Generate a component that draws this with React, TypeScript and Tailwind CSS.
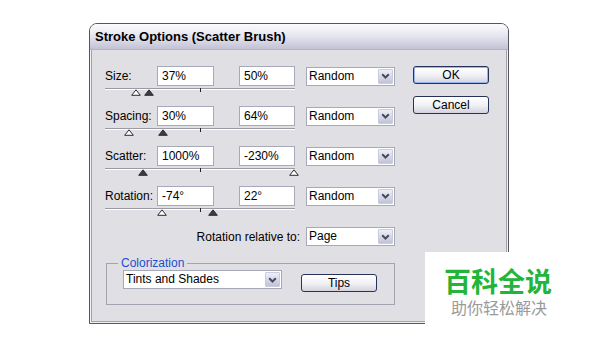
import React from "react";

type Thumb = { left: number; filled: boolean };

function Chevron() {
  return (
    <svg width="9" height="6" viewBox="0 0 9 6" fill="none">
      <path d="M1.2 1.2 L4.5 4.5 L7.8 1.2" stroke="#4a4a5e" strokeWidth="2" />
    </svg>
  );
}

function Select({ value, width }: { value: string; width: string }) {
  return (
    <div className={`${width} h-[19px] flex items-stretch bg-white border border-[#a5a9b8]`}>
      <span className="flex-1 pl-[2px] leading-[17px] text-black">{value}</span>
      <div className="w-[15px] m-px flex items-center justify-center rounded-[1px] border border-[#c9cbe0] bg-gradient-to-b from-[#eef0f8] to-[#bfc3d6]">
        <Chevron />
      </div>
    </div>
  );
}

function Triangle({ left, filled }: Thumb) {
  return (
    <svg
      className="absolute top-[3px]"
      style={{ left }}
      width="10"
      height="7"
      viewBox="0 0 10 7"
    >
      <polygon
        points="5,0.8 9.3,6.3 0.7,6.3"
        fill={filled ? "#3c3c44" : "#ffffff"}
        stroke="#2b2b30"
        strokeWidth="1"
      />
    </svg>
  );
}

function Row({ label, a, b, thumbs }: { label: string; a: string; b: string; thumbs: Thumb[] }) {
  return (
    <div className="h-[40px] flex flex-col">
      <div className="h-[20px] flex items-center">
        <span className="w-[52px]">{label}</span>
        <div className="w-[57px] h-[20px] bg-white border border-[#a5a9b8] pl-[4px] leading-[18px]">{a}</div>
        <div className="ml-[25px] w-[56px] h-[20px] bg-white border border-[#a5a9b8] pl-[4px] leading-[18px]">{b}</div>
        <div className="ml-[11px]">
          <Select value="Random" width="w-[89px]" />
        </div>
      </div>
      <div className="relative w-[190px] h-[20px]">
        <div className="absolute left-0 right-0 top-[2px] h-[2px] border-t border-[#9a9aa4] border-b border-b-white" />
        <div className="absolute left-[95px] top-[2px] w-px h-[4px] bg-[#202024]" />
        {thumbs.map((t, i) => (
          <Triangle key={i} left={t.left} filled={t.filled} />
        ))}
      </div>
    </div>
  );
}

function Button({ label, isDefault }: { label: string; isDefault?: boolean }) {
  return (
    <div
      className={`w-[76px] h-[18px] rounded-[3px] border border-[#27325a] bg-gradient-to-b from-white via-[#f2f2f6] to-[#d2d3de] flex items-center justify-center leading-none ${
        isDefault ? "shadow-[inset_0_0_0_1px_#9bb6ec]" : ""
      }`}
    >
      {label}
    </div>
  );
}

export default function App() {
  return (
    <div className="relative w-[600px] h-[350px] bg-white overflow-hidden pt-[23px] pl-[89px] font-['Liberation_Sans',Arial,sans-serif] text-[12px] text-black">
      <div className="w-[420px] h-[301px] flex flex-col rounded-t-[8px] border border-[#55555f] bg-[#f2f2f5] overflow-hidden">
        <div className="h-[26px] shrink-0 flex items-center pl-[5px] bg-gradient-to-b from-[#fcfcfe] via-[#e4e4ee] to-[#c2c2d6] border-b border-[#b4b4c4]">
          <span className="font-bold text-[13px] text-black">Stroke Options (Scatter Brush)</span>
        </div>
        <div className="flex-1 mx-px mb-px bg-[#e0dfe3] border-x border-b border-[#a2a2ae] pl-[13px] pt-[16px] flex">
          <div className="w-[290px] flex flex-col">
            <Row
              label="Size:"
              a="37%"
              b="50%"
              thumbs={[
                { left: 26, filled: false },
                { left: 39, filled: true },
              ]}
            />
            <Row
              label="Spacing:"
              a="30%"
              b="64%"
              thumbs={[
                { left: 19, filled: false },
                { left: 53, filled: true },
              ]}
            />
            <Row
              label="Scatter:"
              a="1000%"
              b="-230%"
              thumbs={[
                { left: 33, filled: true },
                { left: 184, filled: false },
              ]}
            />
            <Row
              label="Rotation:"
              a="-74°"
              b="22°"
              thumbs={[
                { left: 52, filled: false },
                { left: 103, filled: true },
              ]}
            />
            <div className="mt-px h-[19px] flex items-center justify-end gap-[6px]">
              <span>Rotation relative to:</span>
              <Select value="Page" width="w-[89px]" />
            </div>
            <div className="relative mt-[17px] ml-px w-[289px] h-[42px] border border-[#a4a4b0] flex items-start pl-[16px] pt-[6px]">
              <span className="absolute left-[11px] -top-[8px] px-[3px] bg-[#e0dfe3] text-[#1a4fd0] leading-[14px]">
                Colorization
              </span>
              <Select value="Tints and Shades" width="w-[159px]" />
              <div className="ml-[19px] mt-[4px]">
                <Button label="Tips" />
              </div>
            </div>
          </div>
          <div className="ml-[18px] flex flex-col gap-[12px]">
            <Button label="OK" isDefault />
            <Button label="Cancel" />
          </div>
        </div>
      </div>

      <div className="absolute left-[425px] top-[252px] w-[175px] h-[74px] bg-white pl-[19px] pt-[11px] font-['Noto_Sans_CJK_SC',sans-serif]">
        <div className="text-[27px] leading-[36px] font-bold text-[#22b53a]">百科全说</div>
        <div className="text-[16px] leading-[16px] text-[#9a9a9a] pl-[7px]">助你轻松解决</div>
      </div>
    </div>
  );
}
